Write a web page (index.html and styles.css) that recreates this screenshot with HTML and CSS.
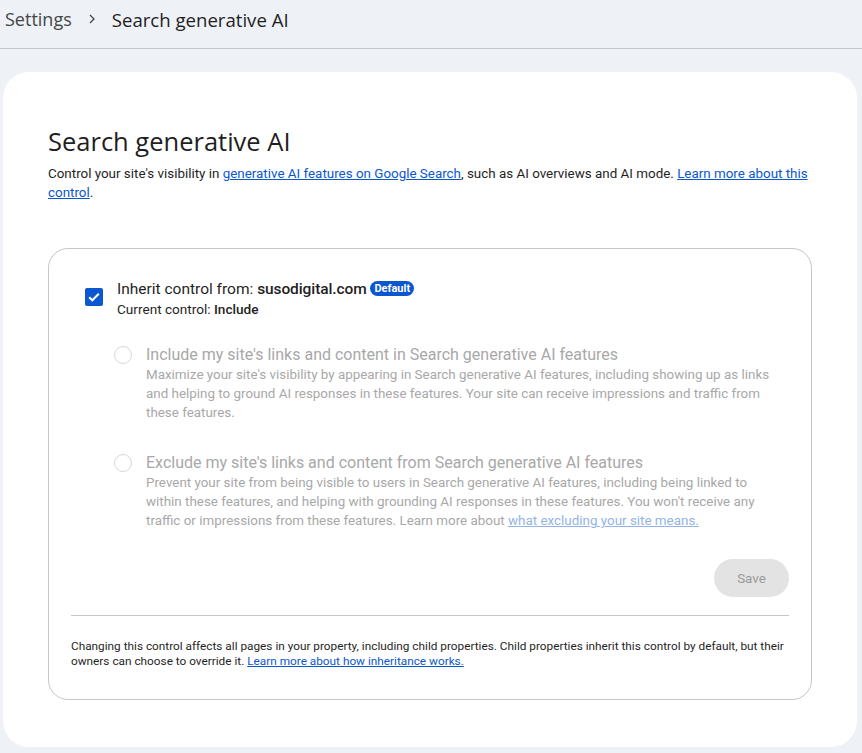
FILE: index.html
```html
<!DOCTYPE html>
<html lang="en">
<head>
    <meta charset="UTF-8">
    <title>Search generative AI</title>
    <link rel="stylesheet" href="styles.css">
</head>
<body>
    <!--面包屑-->
    <div class="crumbs">
        <span class="crumb">Settings</span>
        <span class="sep">
            <svg width="10" height="10" viewBox="0 0 10 10"><path d="M3 1l4 4-4 4" fill="none" stroke="#444746" stroke-width="1.3"/></svg>
        </span>
        <span class="crumb current">Search generative AI</span>
    </div>

    <div class="page">
        <h1 class="title">Search generative AI</h1>
        <p class="intro">Control your site's visibility in <a href="#">generative AI features on Google Search</a>, such as AI overviews and AI mode. <a href="#">Learn more about this control</a>.</p>

        <div class="panel">
            <div class="inherit">
                <span class="check">
                    <svg width="18" height="18" viewBox="0 0 18 18"><rect width="18" height="18" rx="2" fill="#0b57d0"/><path d="M4.2 9.2l3.1 3.1 6.5-6.5" fill="none" stroke="#fff" stroke-width="2"/></svg>
                </span>
                <div class="inherit-text">
                    <div class="inherit-title">Inherit control from: <b>susodigital.com</b> <span class="badge">Default</span></div>
                    <div class="inherit-sub">Current control: <b>Include</b></div>
                </div>
            </div>

            <div class="options">
                <div class="option">
                    <span class="radio"></span>
                    <div class="option-text">
                        <div class="option-title">Include my site's links and content in Search generative AI features</div>
                        <div class="option-desc">Maximize your site's visibility by appearing in Search generative AI features, including showing up as links and helping to ground AI responses in these features. Your site can receive impressions and traffic from these features.</div>
                    </div>
                </div>
                <div class="option">
                    <span class="radio"></span>
                    <div class="option-text">
                        <div class="option-title">Exclude my site's links and content from Search generative AI features</div>
                        <div class="option-desc">Prevent your site from being visible to users in Search generative AI features, including being linked to within these features, and helping with grounding AI responses in these features. You won't receive any traffic or impressions from these features. Learn more about <a href="#">what excluding your site means.</a></div>
                    </div>
                </div>
            </div>

            <div class="actions">
                <button class="save" disabled>Save</button>
            </div>

            <div class="note">Changing this control affects all pages in your property, including child properties. Child properties inherit this control by default, but their owners can choose to override it. <a href="#">Learn more about how inheritance works.</a></div>
        </div>
    </div>
</body>
</html>
```

FILE: styles.css
```css
*{
    margin: 0;
    padding: 0;
    box-sizing: border-box;
}
body{
    background-color: #eef1f6;
    font-family: Roboto, "Open Sans", sans-serif;
    color: #1f1f1f;
}
a{
    color: #0b57d0;
}

/*面包屑*/
.crumbs{
    height: 49px;
    padding: 0 0 10px 5px;
    border-bottom: 1px solid #c4c7c5;
    display: flex;
    align-items: center;
    font-family: "Open Sans", Roboto, sans-serif;
    font-size: 18px;
    color: #444746;
}
.sep{
    margin: 0 15px 0 15px;
    display: flex;
}
.crumb.current{
    color: #1f1f1f;
    font-weight: 500;
    font-size: 18.6px;
}

.page{
    margin: 23px 5px 6px 3px;
    background-color: #fff;
    border-radius: 26px;
    padding: 52px 45px 47px 45px;
}
.title{
    font-family: "Open Sans", Roboto, sans-serif;
    font-weight: 400;
    font-size: 25.5px;
    line-height: 34px;
}
.intro{
    margin-top: 6px;
    font-size: 13.4px;
    line-height: 19px;
}

.panel{
    margin-top: 46px;
    border: 1px solid #c4c7c5;
    border-radius: 20px;
    padding: 30px 22px 30px 22px;
}
.inherit{
    display: flex;
    padding-left: 14px;
}
.check{
    width: 18px;
    height: 18px;
    margin: 9px 14px 0 0;
}
.check svg{
    display: block;
}
.inherit-title{
    font-size: 15.5px;
    line-height: 20px;
}
.inherit-title b{
    font-weight: 500;
    letter-spacing: -0.1px;
}
.badge{
    display: inline-block;
    background-color: #0b57d0;
    color: #fff;
    font-size: 11px;
    font-weight: 700;
    line-height: 15px;
    padding: 0 4px;
    border-radius: 8px;
    vertical-align: 2px;
}
.inherit-sub{
    font-size: 13.6px;
    line-height: 20px;
}
.inherit-sub b{
    font-weight: 500;
}

.options{
    padding-left: 43px;
    margin-top: 26px;
}
.option{
    display: flex;
    color: #a8a8a8;
    margin-bottom: 31px;
}
.option:last-child{
    margin-bottom: 29px;
}
.radio{
    flex: none;
    width: 18px;
    height: 18px;
    border: 1px solid #d8d8d8;
    border-radius: 50%;
    margin: 1px 14px 0 0;
}
.option-title{
    font-size: 16px;
    line-height: 20px;
}
.option-desc{
    font-size: 13.4px;
    line-height: 19px;
    padding-right: 12px;
}
.option-desc a{
    color: #93b3e6;
}

.actions{
    display: flex;
    justify-content: flex-end;
    padding-bottom: 18px;
    border-bottom: 1px solid #c4c7c5;
}
.save{
    width: 75px;
    height: 38px;
    border: none;
    border-radius: 19px;
    background-color: #e3e3e3;
    color: #9a9a9a;
    font-family: Roboto, sans-serif;
    font-size: 13.4px;
}
.note{
    margin-top: 23px;
    font-size: 11.8px;
    line-height: 15px;
}
```
